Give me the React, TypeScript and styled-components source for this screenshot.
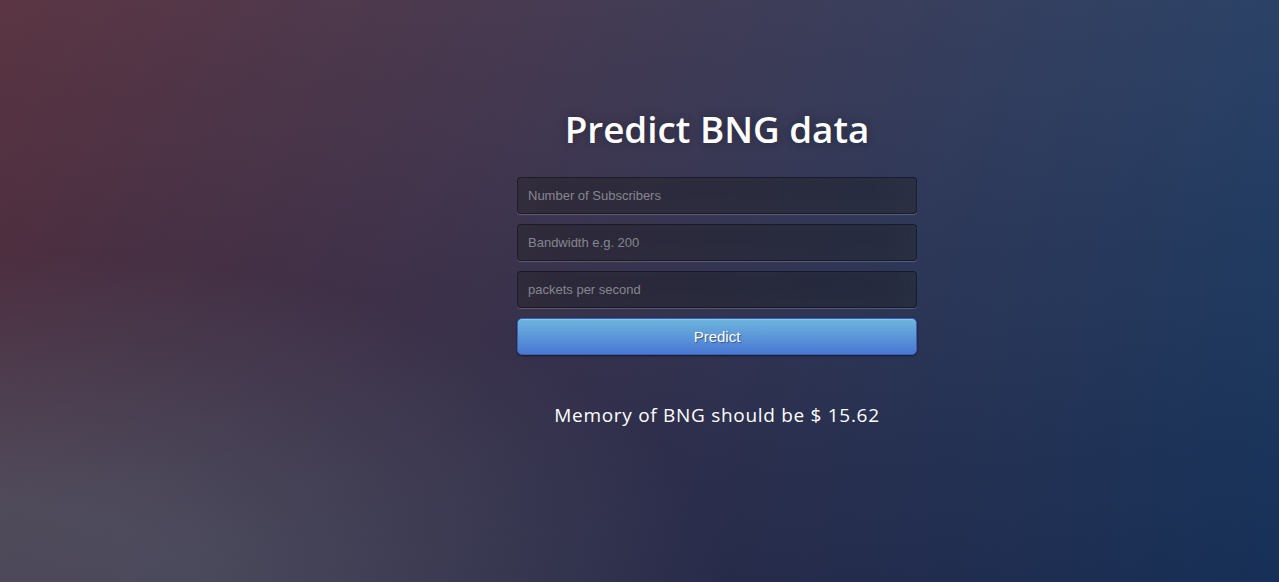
import React from 'react';
import styled, { createGlobalStyle } from 'styled-components';

const GlobalStyle = createGlobalStyle`
  html, body {
    margin: 0;
    width: 100%;
    height: 100%;
    overflow: hidden;
  }
  body {
    font-family: "Open Sans", sans-serif;
    background: #092756;
    background:
      radial-gradient(ellipse farthest-corner at 0% 100%, rgba(104,128,138,.4) 10%, rgba(138,114,76,0) 40%),
      linear-gradient(to bottom, rgba(57,173,219,.25) 0%, rgba(42,60,87,.4) 100%),
      linear-gradient(135deg, #670d10 0%, #092756 100%);
  }
  #root { height: 100%; }
`;

const Page = styled.div`
  height: 100%;
  display: flex;
  justify-content: center;
  align-items: flex-start;
  padding-top: 101px;
  box-sizing: border-box;
`;

const Login = styled.div`
  width: 400px;
  margin-left: 155px;
  display: flex;
  flex-direction: column;
`;

const Title = styled.h1`
  margin: 2px 0 22px;
  color: #fff;
  font-size: 36.8px;
  font-weight: 600;
  line-height: 52px;
  letter-spacing: 0;
  text-align: center;
  text-shadow: 0 0 10px rgba(0, 0, 0, 0.3);
`;

const Form = styled.form`
  display: flex;
  flex-direction: column;
  gap: 10px;
  margin: 0;
`;

const Field = styled.input`
  box-sizing: border-box;
  width: 100%;
  height: 37px;
  padding: 10px;
  font-family: "Liberation Sans", Arial, sans-serif;
  font-size: 13px;
  color: #fff;
  text-shadow: 1px 1px 1px rgba(0, 0, 0, 0.3);
  background: rgba(0, 0, 0, 0.3);
  border: 1px solid rgba(0, 0, 0, 0.3);
  border-radius: 4px;
  outline: none;
  box-shadow: inset 0 -5px 45px rgba(100, 100, 100, 0.2), 0 1px 1px rgba(255, 255, 255, 0.2);

  &::placeholder {
    color: #868690;
    text-shadow: none;
  }
`;

const PrimaryButton = styled.button`
  box-sizing: border-box;
  width: 100%;
  height: 37px;
  padding: 0 14px;
  font-family: "Liberation Sans", Arial, sans-serif;
  font-size: 15px;
  color: #fff;
  text-shadow: 1px 1px 1px rgba(0, 0, 0, 0.4);
  background-color: #4a77d4;
  background-image: linear-gradient(to bottom, #6eb6de, #4a77d4);
  border: 1px solid #3762bc;
  border-radius: 5px;
  box-shadow: inset 0 1px 0 rgba(255, 255, 255, 0.2), 0 1px 2px rgba(0, 0, 0, 0.5);
  cursor: pointer;
`;

const Result = styled.p`
  margin: 47px 0 0;
  color: #fff;
  font-size: 19px;
  letter-spacing: 0.7px;
  text-align: center;
`;

export default function App() {
  return (
    <>
      <GlobalStyle />
      <Page>
        <Login>
          <Title>Predict BNG data</Title>
          <Form onSubmit={e => e.preventDefault()}>
            <Field type="text" placeholder="Number of Subscribers" />
            <Field type="text" placeholder="Bandwidth e.g. 200" />
            <Field type="text" placeholder="packets per second" />
            <PrimaryButton type="submit">Predict</PrimaryButton>
          </Form>
          <Result>Memory of BNG should be $ 15.62</Result>
        </Login>
      </Page>
    </>
  );
}
